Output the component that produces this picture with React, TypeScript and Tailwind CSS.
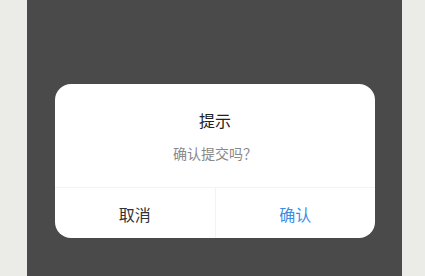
const App = () => {
  return (
    <div
      className="h-[276px] w-[425px] bg-[#ebebe7]"
      style={{ fontFamily: '"Noto Sans CJK SC", "Noto Sans", sans-serif' }}
    >
      <div className="ml-[27px] h-full w-[375px] bg-[#4a4a4a] pt-[84px]">
        {/* Dialog */}
        <div className="ml-[28px] w-[320px] overflow-hidden rounded-2xl bg-white">
          <div className="flex flex-col items-center pt-[25px] pb-[24px]">
            <div className="text-[16px] leading-[22px] text-[#222]">提示</div>
            <div className="mt-3 text-[14px] leading-[20px] text-[#888]">确认提交吗？</div>
          </div>
          {/* Actions */}
          <div className="flex h-[51px] border-t border-[#f3f3f3]">
            <button className="flex-1 border-r border-[#f3f3f3] pt-[2px] text-[16px] text-[#333]">取消</button>
            <button className="flex-1 pt-[2px] text-[16px] text-[#3a8ee6]">确认</button>
          </div>
        </div>
      </div>
    </div>
  )
}

export default App
